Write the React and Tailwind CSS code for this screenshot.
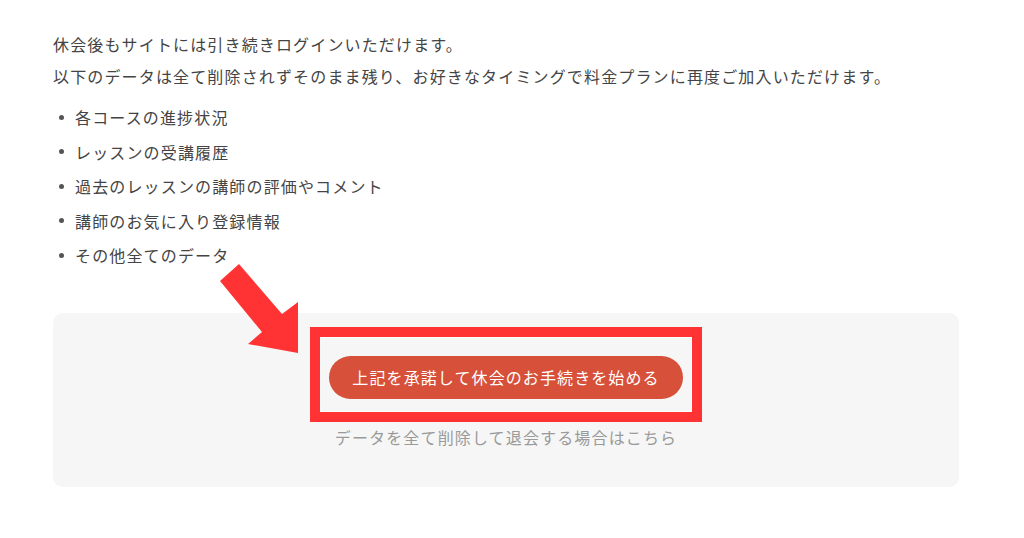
import React from "react";

const items = [
  "各コースの進捗状況",
  "レッスンの受講履歴",
  "過去のレッスンの講師の評価やコメント",
  "講師のお気に入り登録情報",
  "その他全てのデータ",
];

export default function App() {
  return (
    <div
      className="relative w-[1024px] h-[538px] bg-white overflow-hidden text-[#444] text-[16px] tracking-[1.15px]"
      style={{ fontFamily: '"Noto Sans CJK JP", "Noto Sans", sans-serif' }}
    >
      <div className="pl-[53px] pt-[32px] w-[959px]">
        <p className="leading-[24px]">休会後もサイトには引き続きログインいただけます。</p>
        <p className="leading-[24px] mt-[8px]">
          以下のデータは全て削除されずそのまま残り、お好きなタイミングで料金プランに再度ご加入いただけます。
        </p>
        <ul className="mt-[12px]">
          {items.map((t) => (
            <li key={t} className="flex items-center h-[34.5px]">
              <span className="w-[5px] h-[5px] rounded-full bg-[#555] ml-[6px] mr-[11px]" />
              <span>{t}</span>
            </li>
          ))}
        </ul>
        <div className="mt-[40px] bg-[#f5f6f5] rounded-[10px] flex flex-col items-center pt-[43px] pb-[38px]">
          <button className="w-[354px] h-[43px] rounded-full bg-[#d6503a] text-white text-[16px] tracking-[1.1px] flex items-center justify-center">
            上記を承諾して休会のお手続きを始める
          </button>
          <p className="mt-[26px] leading-[24px] text-[#9a9a9a]">データを全て削除して退会する場合はこちら</p>
        </div>
      </div>

      <div className="absolute left-[310px] top-[327px] w-[392px] h-[95px] border-[10px] border-[#ff3333]">
        <div className="absolute inset-0 border border-white/70" />
      </div>

      <svg className="absolute left-0 top-0" width="1024" height="538" viewBox="0 0 1024 538">
        <polygon
          points="239,264 282,314 298,302 298,353 248,344 262,332 220,281"
          fill="#ff3333"
        />
      </svg>
    </div>
  );
}
